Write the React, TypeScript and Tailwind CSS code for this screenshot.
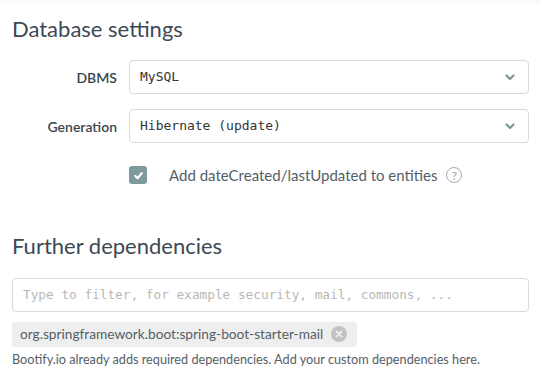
function Chevron() {
  return (
    <svg className="w-3 h-3 text-[#7e9898]" viewBox="0 0 12 12" fill="none" stroke="currentColor" strokeWidth={2.2} strokeLinecap="round" strokeLinejoin="round">
      <path d="M2.5 4.5 6 8l3.5-3.5" />
    </svg>
  );
}

function SelectRow({ label, value }: { label: string; value: string }) {
  return (
    <div className="flex items-center">
      <label className="w-[105px] text-right text-[14px] font-semibold text-[#3a4650]">{label}</label>
      <div className="ml-3 flex-1 h-[34px] border border-[#d9d9d9] rounded-[4px] flex items-center justify-between pl-[10px] pr-[12px]">
        <span className="font-['DejaVu_Sans_Mono',monospace] text-[13px] text-[#333]">{value}</span>
        <Chevron />
      </div>
    </div>
  );
}

export default function App() {
  return (
    <div className="w-[539px] h-[384px] bg-white font-['Lato',sans-serif] text-[#3a4650] overflow-hidden">
      <div className="h-[4px] bg-[#fafafa]" />
      <div className="px-3 pr-[10px]">
        <h2 className="text-[22px] leading-none mt-[14px] text-[#3d4954]">Database settings</h2>
        <div className="mt-[20px] flex flex-col gap-[15px]">
          <SelectRow label="DBMS" value="MySQL" />
          <SelectRow label="Generation" value="Hibernate (update)" />
        </div>
        <div className="flex items-center ml-[105px] pl-3 mt-[21px]">
          <span className="w-[18px] h-[18px] rounded-[3px] bg-[#7f9a9a] flex items-center justify-center">
            <svg className="w-[11px] h-[11px]" viewBox="0 0 12 12" fill="none" stroke="white" strokeWidth={2.4} strokeLinecap="round" strokeLinejoin="round">
              <path d="M2.5 6.5 5 9l4.5-5.5" />
            </svg>
          </span>
          <span className="ml-[22px] text-[15px] text-[#555e66]">Add dateCreated/lastUpdated to entities</span>
          <span className="ml-[9px] w-[16px] h-[16px] rounded-full border border-[#aaa] text-[#999] text-[11px] leading-none flex items-center justify-center">?</span>
        </div>
        <h2 className="text-[22px] leading-none mt-[48px] text-[#3d4954]">Further dependencies</h2>
        <div className="mt-[21px] h-[34px] border border-[#d9d9d9] rounded-[4px] flex items-center px-[10px]">
          <span className="font-['DejaVu_Sans_Mono',monospace] text-[12.75px] text-[#b8b8b8]">Type to filter, for example security, mail, commons, ...</span>
        </div>
        <div className="mt-[10px] inline-flex items-center h-[25px] bg-[#eeeeee] rounded-[3px] pl-[8px] pr-[10px]">
          <span className="text-[13.7px] text-[#555e66]">org.springframework.boot:spring-boot-starter-mail</span>
          <span className="ml-[8px] w-[16px] h-[16px] rounded-full bg-[#c2c2c2] flex items-center justify-center">
            <svg className="w-[8px] h-[8px]" viewBox="0 0 8 8" stroke="#eeeeee" strokeWidth={1.8} strokeLinecap="round">
              <path d="M1.5 1.5l5 5M6.5 1.5l-5 5" />
            </svg>
          </span>
        </div>
        <p className="mt-[3px] text-[12.7px] text-[#555e66]">Bootify.io already adds required dependencies. Add your custom dependencies here.</p>
      </div>
    </div>
  );
}
